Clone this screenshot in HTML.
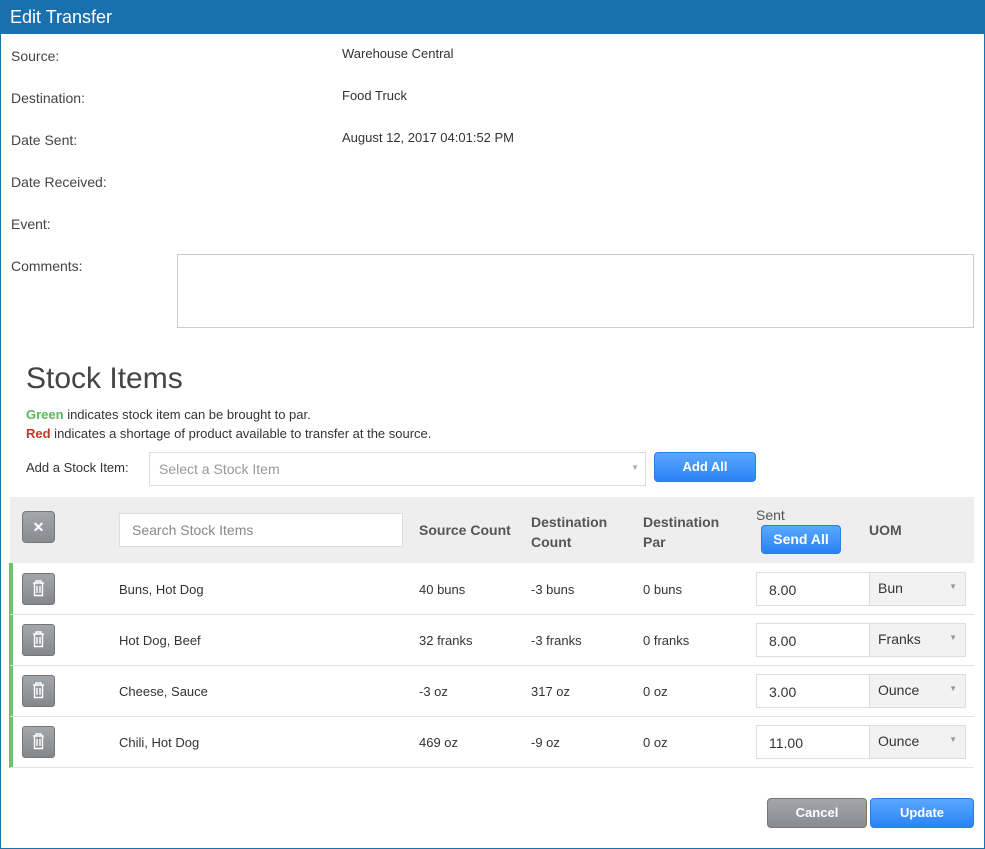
<!DOCTYPE html>
<html><head><meta charset="utf-8"><style>
*{box-sizing:border-box;margin:0;padding:0}
body{width:985px;height:849px;position:relative;background:#fff;font-family:"Liberation Sans",sans-serif;color:#333;overflow:hidden}
.a{position:absolute;white-space:nowrap}
.frame{position:absolute;left:0;top:0;width:985px;height:849px;border:1px solid #1a6fad}
.hdr{position:absolute;left:0;top:0;width:985px;height:34px;background:#1a6fad;color:#fff;font-size:18px;padding:7px 10px}
.lbl{font-size:14px;color:#444}
.val{font-size:13px;color:#333}
.btn{position:absolute;border-radius:4px;color:#fff;font-weight:bold;font-size:13px;text-align:center}
.blue{background:linear-gradient(#5aa8ff,#2a83f5);border:1px solid #2b7de0}
.gray{background:linear-gradient(#a3a6ab,#888b90);border:1px solid #777}
.cell{font-size:13px;color:#333}
.inp{position:absolute;background:#fff;border:1px solid #ddd}
.sel{position:absolute;background:#f2f2f2;border:1px solid #ddd;font-size:14px;padding:7px 8px;color:#333}
.sel:after{content:"▼";position:absolute;right:8px;top:9px;font-size:8px;color:#999}
.rowline{position:absolute;left:10px;width:964px;height:1px;background:#e3e3e3}
.trash{position:absolute;left:22px;width:33px;height:32px;border-radius:3px;background:linear-gradient(#a3a6ab,#84878c);border:1px solid #777}
</style></head><body>
<div class="hdr">Edit Transfer</div>
<div class="a lbl" style="left:11px;top:48px">Source:</div>
<div class="a val" style="left:342px;top:46px">Warehouse Central</div>
<div class="a lbl" style="left:11px;top:90px">Destination:</div>
<div class="a val" style="left:342px;top:88px">Food Truck</div>
<div class="a lbl" style="left:11px;top:132px">Date Sent:</div>
<div class="a val" style="left:342px;top:130px">August 12, 2017 04:01:52 PM</div>
<div class="a lbl" style="left:11px;top:174px">Date Received:</div>
<div class="a lbl" style="left:11px;top:216px">Event:</div>
<div class="a lbl" style="left:11px;top:258px">Comments:</div>
<div class="inp" style="left:177px;top:254px;width:797px;height:74px;border-color:#ccc"></div>

<div class="a" style="left:26px;top:362px;font-size:30px;color:#444;font-weight:300">Stock Items</div>
<div class="a" style="left:26px;top:407px;font-size:13px"><b style="color:#5cb85c">Green</b> indicates stock item can be brought to par.</div>
<div class="a" style="left:26px;top:426px;font-size:13px"><b style="color:#c0392b">Red</b> indicates a shortage of product available to transfer at the source.</div>
<div class="a" style="left:26px;top:460px;font-size:13px">Add a Stock Item:</div>
<div class="inp" style="left:149px;top:452px;width:497px;height:34px;font-size:14px;color:#999;padding:8px 9px">Select a Stock Item<span style="position:absolute;right:6px;top:10px;font-size:8px;color:#aaa">▼</span></div>
<div class="btn blue" style="left:654px;top:452px;width:102px;height:30px;line-height:28px">Add All</div>

<div class="a" style="left:10px;top:497px;width:964px;height:66px;background:#eee"></div>
<div class="btn gray" style="left:22px;top:511px;width:33px;height:32px;line-height:30px;font-size:14px">✕</div>
<div class="inp" style="left:119px;top:513px;width:284px;height:34px;font-size:14px;color:#888;padding:8px 12px">Search Stock Items</div>
<div class="a cell" style="left:419px;top:522px;font-size:14px;font-weight:bold;color:#555">Source Count</div>
<div class="a cell" style="left:531px;top:512px;font-size:14px;font-weight:bold;color:#555;line-height:20px">Destination<br>Count</div>
<div class="a cell" style="left:643px;top:512px;font-size:14px;font-weight:bold;color:#555;line-height:20px">Destination<br>Par</div>
<div class="a cell" style="left:756px;top:507px;font-size:14px;color:#555">Sent</div>
<div class="btn blue" style="left:761px;top:525px;width:80px;height:29px;line-height:27px;font-size:14px">Send All</div>
<div class="a cell" style="left:869px;top:522px;font-size:14px;font-weight:bold;color:#555">UOM</div>

<div class="a" style="left:9px;top:563px;width:4px;height:205px;background:#6cc36c"></div>

<div class="rowline" style="top:614px"></div>
<div class="rowline" style="top:665px"></div>
<div class="rowline" style="top:716px"></div>
<div class="rowline" style="top:767px"></div>

<!-- rows -->
<div class="trash" style="top:573px"></div>
<div class="a cell" style="left:119px;top:582px">Buns, Hot Dog</div>
<div class="a cell" style="left:419px;top:582px">40 buns</div>
<div class="a cell" style="left:531px;top:582px">-3 buns</div>
<div class="a cell" style="left:643px;top:582px">0 buns</div>
<div class="inp" style="left:756px;top:572px;width:114px;height:34px;font-size:14px;padding:9px 12px">8.00</div>
<div class="sel" style="left:869px;top:572px;width:97px;height:34px">Bun</div>

<div class="trash" style="top:624px"></div>
<div class="a cell" style="left:119px;top:633px">Hot Dog, Beef</div>
<div class="a cell" style="left:419px;top:633px">32 franks</div>
<div class="a cell" style="left:531px;top:633px">-3 franks</div>
<div class="a cell" style="left:643px;top:633px">0 franks</div>
<div class="inp" style="left:756px;top:623px;width:114px;height:34px;font-size:14px;padding:9px 12px">8.00</div>
<div class="sel" style="left:869px;top:623px;width:97px;height:34px">Franks</div>

<div class="trash" style="top:675px"></div>
<div class="a cell" style="left:119px;top:684px">Cheese, Sauce</div>
<div class="a cell" style="left:419px;top:684px">-3 oz</div>
<div class="a cell" style="left:531px;top:684px">317 oz</div>
<div class="a cell" style="left:643px;top:684px">0 oz</div>
<div class="inp" style="left:756px;top:674px;width:114px;height:34px;font-size:14px;padding:9px 12px">3.00</div>
<div class="sel" style="left:869px;top:674px;width:97px;height:34px">Ounce</div>

<div class="trash" style="top:726px"></div>
<div class="a cell" style="left:119px;top:735px">Chili, Hot Dog</div>
<div class="a cell" style="left:419px;top:735px">469 oz</div>
<div class="a cell" style="left:531px;top:735px">-9 oz</div>
<div class="a cell" style="left:643px;top:735px">0 oz</div>
<div class="inp" style="left:756px;top:725px;width:114px;height:34px;font-size:14px;padding:9px 12px">11.00</div>
<div class="sel" style="left:869px;top:725px;width:97px;height:34px">Ounce</div>

<svg class="a" style="left:22px;top:573px" width="33" height="200" viewBox="0 0 33 200">
<g fill="none" stroke="#fff" stroke-width="1.4">
<g transform="translate(0,0)"><path d="M11 10h11M14 10V8h5v2M12.5 10.5v12h8v-12M15 13v7M18 13v7"/></g>
<g transform="translate(0,51)"><path d="M11 10h11M14 10V8h5v2M12.5 10.5v12h8v-12M15 13v7M18 13v7"/></g>
<g transform="translate(0,102)"><path d="M11 10h11M14 10V8h5v2M12.5 10.5v12h8v-12M15 13v7M18 13v7"/></g>
<g transform="translate(0,153)"><path d="M11 10h11M14 10V8h5v2M12.5 10.5v12h8v-12M15 13v7M18 13v7"/></g>
</g></svg>

<div class="btn gray" style="left:767px;top:798px;width:100px;height:30px;line-height:28px">Cancel</div>
<div class="btn blue" style="left:870px;top:798px;width:104px;height:30px;line-height:28px">Update</div>
<div class="frame"></div>
</body></html>
